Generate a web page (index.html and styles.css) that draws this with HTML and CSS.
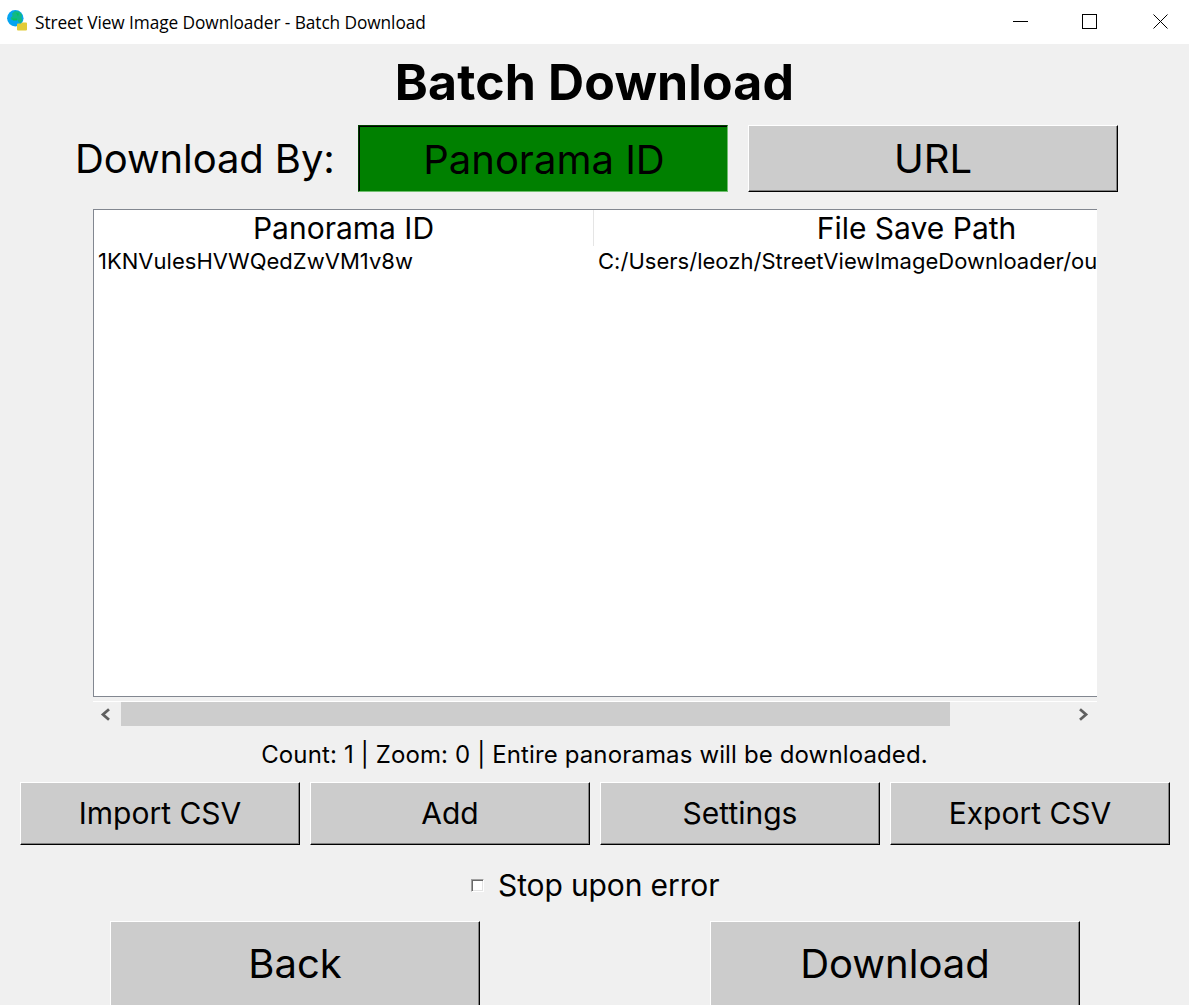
FILE: index.html
```html
<!DOCTYPE html>
<html lang="en">
<head>
<meta charset="utf-8">
<title>Street View Image Downloader - Batch Download</title>
<link rel="stylesheet" href="styles.css">
</head>
<body>
<div class="window">
  <header class="titlebar">
    <svg class="app-icon" width="20" height="22" viewBox="0 0 20 22">
      <circle cx="8.3" cy="8.3" r="8.2" fill="#05a4f0"/>
      <path d="M5 3.500 8 1l4 .5 3 3-.5 3 1 3-2 3-2-1.500-1-2-3-.5-3 .500-1-2 2-2z" fill="#12b887"/>
      <path d="M5 8.500h5v2H6zM9 3l3 .5-1 3z" fill="#08c25c"/>
      <path d="M10 14.500q0-1 1-1h3l1-1h4q1 0 1 1v6q0 1-1 1h-8q-1 0-1-1z" fill="#e2cb36"/>
    </svg>
    <span class="caption">Street View Image Downloader - Batch Download</span>
    <svg class="controls" width="156" height="16" viewBox="0 0 156 16" fill="none" stroke="#000" shape-rendering="crispEdges">
      <path d="M0 7.500h15M69.500.500h14v14h-14z"/>
      <path d="M140.500.500l14 14M154.500.500l-14 14" shape-rendering="auto"/>
    </svg>
  </header>
  <main class="content">
    <h1 class="heading">Batch Download</h1>
    <div class="mode">
      <span class="mode-label">Download By:</span>
      <button class="btn large selected">Panorama ID</button>
      <button class="btn large">URL</button>
    </div>
    <div class="table">
      <div class="row head"><div class="cell">Panorama ID</div><div class="cell">File Save Path</div></div>
      <div class="row"><div class="cell">1KNVulesHVWQedZwVM1v8w</div><div class="cell">C:/Users/leozh/StreetViewImageDownloader/ou</div></div>
    </div>
    <div class="scrollbar">
      <svg class="arrow" width="28" height="24" viewBox="0 0 28 24"><path d="M16 7.300 10 12.500l6 5.200" fill="none" stroke="#606060" stroke-width="2.800"/></svg>
      <div class="track"><div class="thumb"></div></div>
      <svg class="arrow" width="28" height="24" viewBox="0 0 28 24"><path d="M11 7.300l6 5.200-6 5.200" fill="none" stroke="#606060" stroke-width="2.800"/></svg>
    </div>
    <p class="status">Count: 1 | Zoom: 0 | Entire panoramas will be downloaded.</p>
    <div class="actions">
      <button class="btn">Import CSV</button>
      <button class="btn">Add</button>
      <button class="btn">Settings</button>
      <button class="btn">Export CSV</button>
    </div>
    <label class="option"><span class="checkbox"></span><span class="option-text">Stop upon error</span></label>
    <div class="footer">
      <button class="btn large">Back</button>
      <button class="btn large">Download</button>
    </div>
  </main>
</div>
</body>
</html>
```
FILE: styles.css
```css
* { box-sizing: border-box; }
body {
  margin: 0;
  background: #f0f0f0;
  color: #000;
  font-family: Inter, sans-serif;
  font-weight: 400;
  overflow: hidden;
}
.window { width: 1189px; height: 1005px; overflow: hidden; display: flex; flex-direction: column; }
.titlebar {
  height: 44px;
  flex: none;
  background: #fff;
  display: flex;
  align-items: flex-start;
  padding: 10px 20px 0 7px;
}
.caption {
  margin-left: 8px;
  font: 17.3px/25px "Open Sans", sans-serif;
  letter-spacing: -0.08px;
  white-space: nowrap;
}
.controls { margin: 4px 0 0 auto; }
.content { flex: none; display: flex; flex-direction: column; }
.heading { margin: 0; height: 81px; font-size: 50px; line-height: 76px; font-weight: 700; letter-spacing: 0.15px; text-align: center; }
.mode { height: 67px; display: flex; padding-left: 75px; gap: 20px; }
.mode-label { width: 263px; font-size: 40px; line-height: 67px; letter-spacing: -0.1px; white-space: nowrap; }
.btn {
  width: 280px;
  height: 63px;
  margin: 0;
  padding: 0;
  border: 1px solid;
  border-color: #fff #000 #000 #fff;
  background: #ccc;
  box-shadow: inset -1px -1px #808080;
  font: 400 30px/61px Inter, sans-serif;
  color: #000;
  white-space: nowrap;
}
.btn.large { width: 370px; height: 67px; font-size: 40px; line-height: 65px; }
.btn.selected {
  background: #008000;
  border-color: #003f00 #6fbf6f #6fbf6f #003f00;
  box-shadow: inset 1px 1px #000;
  padding: 1px 0 0 2px;
}
.table {
  margin: 17px 92px 0 93px;
  height: 488px;
  background: #fff;
  border: 1px solid #828790;
  border-right: 0;
  overflow: hidden;
}
.row { display: grid; grid-template-columns: 500px 503px; height: 30px; font-size: 22px; line-height: 30px; letter-spacing: 0.02px; white-space: nowrap; }
.cell { padding-left: 4px; }
.head { grid-template-columns: 500px 646px; height: 36px; font-size: 30px; line-height: 37px; letter-spacing: 0; text-align: center; }
.head .cell { padding: 0; height: 36px; border-right: 1px solid #e5e5e5; }
.scrollbar { margin: 4px 92px 0 93px; height: 25px; border-top: 1px solid #fff; display: flex; }
.track { flex: 1; }
.thumb { width: 829px; height: 24px; background: #cdcdcd; }
.status { margin: 13px 0 0; height: 43px; font-size: 24px; line-height: 31px; letter-spacing: 0.13px; text-align: center; }
.actions { display: flex; gap: 10px; padding-left: 20px; }
.option { height: 76px; padding: 4px 0 0 471px; display: flex; align-items: center; gap: 14px; font-size: 30px; letter-spacing: -0.12px; }
.checkbox {
  width: 13px;
  height: 13px;
  background: #fff;
  border: 1px solid;
  border-color: #a0a0a0 #fff #fff #a0a0a0;
  box-shadow: inset 1px 1px #696969, inset -1px -1px #e3e3e3;
}
.footer { display: flex; gap: 230px; padding-left: 110px; }
.footer .btn.large { height: 87px; padding-bottom: 2px; }
```
